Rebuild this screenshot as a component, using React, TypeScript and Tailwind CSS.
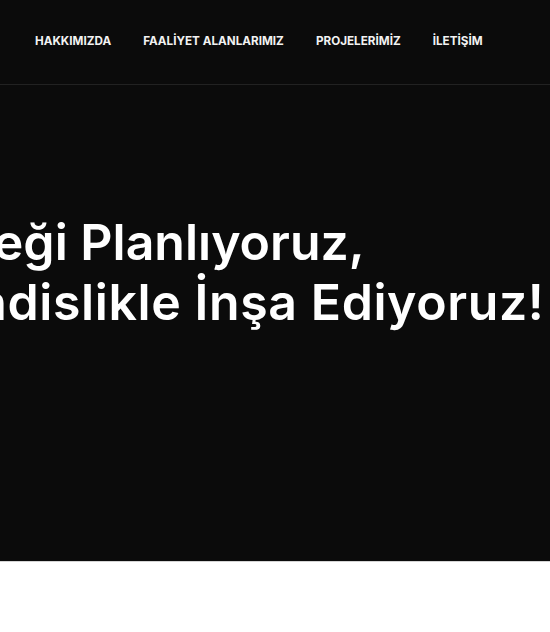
const navItems = ["HAKKIMIZDA", "FAALİYET ALANLARIMIZ", "PROJELERİMİZ", "İLETİŞİM"];

const App = () => {
  return (
    <div className="min-h-screen w-full overflow-hidden bg-white" style={{ fontFamily: "Inter, 'Open Sans', sans-serif" }}>
      <header className="h-[85px] bg-[#0b0b0b] border-b border-[#222222] flex items-center">
        <nav className="flex items-center gap-[32px] pl-[35px] pb-[1px]">
          {navItems.map((item) => (
            <a
              key={item}
              href="#"
              className="text-[11.7px] font-bold text-[#f2f2f2] whitespace-nowrap"
            >
              {item}
            </a>
          ))}
        </nav>
      </header>

      <section className="h-[476px] bg-[#0b0b0b] overflow-hidden pt-[127px]">
        <h1 className="whitespace-nowrap text-[50px] leading-[60px] font-semibold text-white">
          <span className="block ml-[-145px]">Geleceği Planlıyoruz,</span>
          <span className="block ml-[-163px] tracking-[0.6px]">Mühendislikle İnşa Ediyoruz!</span>
        </h1>
      </section>

      <div className="h-[71px] bg-white border-t border-[#d4d4d4]" />
    </div>
  );
};

export default App;
